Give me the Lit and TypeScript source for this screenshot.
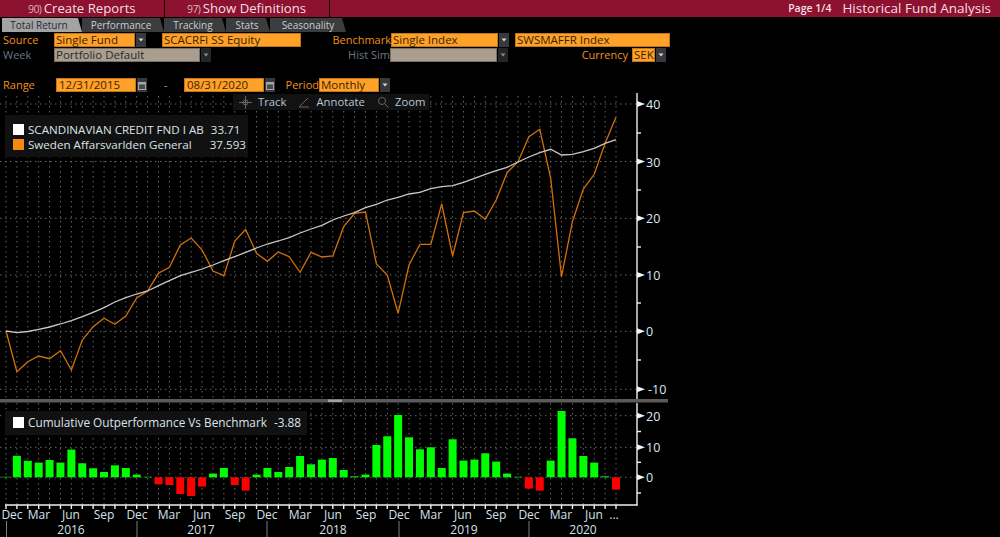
import { LitElement, html, css, svg } from "lit";
import { customElement } from "lit/decorators.js";

const X = (i: number) => 6 + i * 10.893;
const orange = [331,371.7,361.7,356,358.7,350.7,370,340,326.7,318.3,324.3,316,298,291,273.3,267.3,245,238,250,271,275.7,241,229.3,253.3,261.3,252,256.7,272.3,252.3,257,256,226.7,213.3,212,264,275,313.3,265,244.3,244.3,204,256,212.7,211,219.3,200,172.7,161.7,136.7,129.3,178.3,276.7,221.7,189,174.3,143.3,117.3];
const white = [331,332.7,331.5,329.3,327,324,320.7,316.7,312.3,307.7,302,297.7,294,291,285.7,280.7,275.7,272.3,269,265,260.7,256.7,252.3,248,244,241,237.7,233,229,225.3,220,216,212.7,207.7,204.3,200,197.3,194,192.3,188.7,186.7,185.7,182.3,178.3,174.3,170.7,167.3,162,157,152.7,149.3,155,154.3,151.7,148.3,143.3,139.7];
// bar height in pixels: positive rises from the zero line, negative hangs below it
const bars = [0.5,21.5,16.5,14.7,17.3,14.7,27.7,14,9,5.3,12,9.3,2.7,0.5,-7,-7.7,-16.7,-18.7,-9.3,3.7,9.3,-7.7,-13.3,2.7,9.3,5.3,10.3,21.3,13,17.7,19.3,7.3,1,2.7,32.3,41,62.3,40,28,30,9.3,38,16.7,17.7,24,15.7,3.7,0.5,-11.3,-13.3,16.7,66.3,39,21.3,14.7,1,-12.3];
const ZERO = 477.3;
const mainTicks: [number, string][] = [[104,"40"],[161.5,"30"],[218.3,"20"],[275,"10"],[331.3,"0"],[389.3,"-10"]];
const mainMinor = [133,190,247,303,360];
const subTicks: [number, string][] = [[415.7,"20"],[447.3,"10"],[477.3,"0"]];
const subMinor = [431.5,462.3,493];
const months: [number, string][] = [[12,"Dec"],[39,"Mar"],[71,"Jun"],[104,"Sep"],[137,"Dec"],[169,"Mar"],[202,"Jun"],[235,"Sep"],[267,"Dec"],[300,"Mar"],[333,"Jun"],[366,"Sep"],[399,"Dec"],[431,"Mar"],[463,"Jun"],[496,"Sep"],[529,"Dec"],[561,"Mar"],[594,"Jun"],[614,"..."]];
const years: [number, string][] = [[71,"2016"],[201,"2017"],[333,"2018"],[464,"2019"],[583,"2020"]];
const seps = [6.5,137,267,399,529];
const pts = (a: number[]) => a.map((y, i) => `${X(i).toFixed(1)},${y}`).join(" ");

const tri = (y: number) => svg`<polygon class="tri" points="637,${y - 3} 645,${y} 637,${y + 3}"></polygon>`;

@customElement("app-root")
export class AppRoot extends LitElement {
  static styles = css`
    :host { display: block; width: 1000px; height: 537px; background: #000; overflow: hidden;
      font-family: "Open Sans", "Noto Sans", sans-serif; }
    .head { display: flex; height: 17px; background: #8c1230; color: #f4dfe4; font-size: 13.2px; line-height: 17px; }
    .hbtn { border-right: 1px solid #1a0208; padding-left: 28px; box-sizing: border-box; white-space: nowrap; }
    .hbtn.a { width: 165px; }
    .hbtn.b { width: 165px; padding-left: 22px; }
    .num { color: #d9b3bd; font-size: 10.5px; letter-spacing: -0.6px; margin-right: -1px; }
    .pg { margin-left: auto; font-size: 10.5px; font-weight: 600; margin-right: 11px; }
    .ttl { margin-right: 9px; font-size: 13.5px; }
    .tabs { display: flex; height: 15px; padding-left: 2px; background: #000; }
    .tab { height: 14px; margin-top: 1px; font-size: 10px; line-height: 14px; background: #3a3c3e; color: #c6ccd2; text-align: center; box-sizing: border-box;
      clip-path: polygon(0 0, calc(100% - 4px) 0, 100% 100%, 0 100%); }
    .tab.on { background: #a3a3a3; color: #2a2a3a; }
    .t1 { width: 80px; padding-right: 6px; } .t2 { width: 82px; padding-right: 4px; } .t3 { width: 62px; padding-right: 4px; } .t4 { width: 44px; padding-right: 2px; } .t5 { width: 76px; }
    .row { display: flex; height: 14px; margin-top: 1px; font-size: 11.5px; line-height: 13px; color: #f0901e; white-space: nowrap; }
    .row.r3 { margin-top: 16px; height: 14px; }
    .lab { padding-left: 3px; box-sizing: border-box; font-size: 11px; }
    .lab.dim { color: #6b7682; }
    .right { text-align: right; padding: 0; }
    .f { background: #ffa028; color: #3a2400; box-shadow: inset 0 0 0 1px #c07818; padding-left: 2px; box-sizing: border-box; }
    .f.g { background: #a99e90; color: #2c2a28; box-shadow: inset 0 0 0 1px #777067; }
    .btn { width: 10px; margin-left: 1px; background: #37393c; display: flex; align-items: center; justify-content: center; }
    .btn svg { display: block; }
    .btn.dim { opacity: .65; }
    .w23 { width: 23px; } .w60 { width: 60px; } .w80 { width: 80px; padding-left: 3px; } .w81 { width: 81px; } .w107 { width: 107px; }
    .w139 { width: 139px; } .w146 { width: 146px; } .w155 { width: 155px; }
    .l54 { width: 54px; } .l56 { width: 56px; }
    .m16 { margin-left: 16px; } .m6 { margin-left: 6px; } .m4 { margin-left: 4px; }
    .l90 { width: 90px; } .l179 { width: 179px; } .l120 { width: 120px; } .l43 { width: 44px; }
    .dash { width: 37px; text-align: center; }
    .chart { position: relative; height: 444px; margin-top: 1px; }
    .chart > svg { display: block; }
    .grid { stroke: #666; stroke-width: 1; stroke-dasharray: 1.5 3.5; }
    .axis { stroke: #eef2f5; stroke-width: 1.4; }
    .tri { fill: #f2f5f7; }
    .nl { fill: #dce8f2; font-size: 12.5px; }
    .xl { fill: #d6e0ea; font-size: 12px; text-anchor: middle; }
    .tools { position: absolute; left: 233px; top: 1px; height: 16px; display: flex; background: #121212; color: #b8c6d4; font-size: 11.3px; line-height: 16px; align-items: center; }
    .tool { display: flex; align-items: center; gap: 6px; padding: 0 4px 0 6px; }
    .tool.wide { padding-left: 8px; }
    .tool svg { display: block; }
    .legend { position: absolute; left: 5px; background: #111; color: #dbe3ea; font-size: 11.6px; line-height: 15px; padding: 7px 3px 5px 8px; }
    .lg1 { top: 22px; width: 232px; }
    .lg2 { top: 318px; width: 291px; padding: 4px 3px 5px 8px; font-size: 11.8px; }
    .li { display: flex; align-items: center; white-space: nowrap; }
    .sw { width: 11px; height: 11px; margin-right: 4px; flex: none; }
    .sw.w { background: #fff; } .sw.o { background: #f48a12; }
    .val { margin-left: 7px; }
    .val2 { margin-left: 18px; }
  `;

  private caret() {
    return html`<svg width="6" height="4" viewBox="0 0 6 4"><path d="M0.5 0.5H5.5L3 3.5Z" fill="#d8d8d8"/></svg>`;
  }
  private cal() {
    return html`<svg width="8" height="9" viewBox="0 0 8 9"><path d="M0 1H8V9H0Z" fill="#a8a8a8"/><path d="M1 3.5H7V8H1Z" fill="#4a4a4a"/></svg>`;
  }

  render() {
    return html`
      <div class="head">
        <div class="hbtn a"><span class="num">90)</span> Create Reports</div>
        <div class="hbtn b"><span class="num">97)</span> Show Definitions</div>
        <div class="pg">Page 1/4</div>
        <div class="ttl">Historical Fund Analysis</div>
      </div>
      <div class="tabs">
        <div class="tab on t1">Total Return</div>
        <div class="tab t2">Performance</div>
        <div class="tab t3">Tracking</div>
        <div class="tab t4">Stats</div>
        <div class="tab t5">Seasonality</div>
      </div>
      <div class="row">
        <div class="lab l54">Source</div>
        <div class="f w81">Single Fund</div><div class="btn">${this.caret()}</div>
        <div class="f w139 m16">SCACRFI SS Equity</div>
        <div class="lab right l90">Benchmark</div>
        <div class="f w107">Single Index</div><div class="btn">${this.caret()}</div>
        <div class="f w155 m6">SWSMAFFR Index</div>
      </div>
      <div class="row">
        <div class="lab dim l54">Week</div>
        <div class="f g w146">Portfolio Default</div><div class="btn dim">${this.caret()}</div>
        <div class="lab dim right l179">Hist Sim</div>
        <div class="f g w107"></div><div class="btn dim">${this.caret()}</div>
        <div class="lab right l120">Currency</div>
        <div class="f w23 m4">SEK</div><div class="btn">${this.caret()}</div>
      </div>
      <div class="row r3">
        <div class="lab l56">Range</div>
        <div class="f w80">12/31/2015</div><div class="btn">${this.cal()}</div>
        <div class="dash">-</div>
        <div class="f w80">08/31/2020</div><div class="btn">${this.cal()}</div>
        <div class="lab right l43">Period</div>
        <div class="f w60">Monthly</div><div class="btn">${this.caret()}</div>
      </div>
      <div class="chart">
        <svg width="1000" height="444" viewBox="0 93 1000 444">
          ${orange.map((_, i) => svg`
            <line class="grid" x1=${X(i)} x2=${X(i)} y1="96" y2="398"></line>
            <line class="grid" x1=${X(i)} x2=${X(i)} y1="403" y2="505"></line>`)}
          ${[...mainTicks, ...subTicks].map(([y]) => svg`<line class="grid" x1="0" x2="637" y1=${y} y2=${y}></line>`)}
          ${bars.map((h, i) => {
            const tall = Math.abs(h);
            return svg`<rect x=${X(i) - 4} width="8" y=${h >= 0 ? ZERO - tall : ZERO} height=${tall} fill=${h >= 0 ? "#00ff00" : "#ff0000"}></rect>`;
          })}
          <polyline points=${pts(orange)} fill="none" stroke="#d2700a" stroke-width="1.3"></polyline>
          <polyline points=${pts(white)} fill="none" stroke="#c8c8c8" stroke-width="1.3"></polyline>
          <rect x="0" y="399" width="668" height="3.5" fill="#5a5a5a"></rect>
          <rect x="328" y="399.5" width="14" height="2.5" fill="#a0a0a0"></rect>
          <line class="axis" x1="637" x2="637" y1="93" y2="399"></line>
          <line class="axis" x1="637" x2="637" y1="403" y2="505.5"></line>
          <line class="axis" x1="5" x2="637.5" y1="505" y2="505"></line>
          ${orange.map((_, i) => svg`<line class="axis" x1=${X(i)} x2=${X(i)} y1="505" y2="509"></line>`)}
          ${[...mainMinor, ...subMinor].map((y) => svg`<line class="axis" x1="637" x2="641" y1=${y} y2=${y}></line>`)}
          ${[...mainTicks, ...subTicks].map(([y, t]) => svg`${tri(y)}<text class="nl" x=${t === "-10" ? 648 : 646} y=${y + 5}>${t}</text>`)}
          ${months.map(([x, t]) => svg`<text class="xl" x=${x} y="519">${t}</text>`)}
          ${years.map(([x, t]) => svg`<text class="xl" x=${x} y="534">${t}</text>`)}
          ${seps.map((x) => svg`<line x1=${x} x2=${x} y1="521" y2="537" stroke="#7a7a7a"></line>`)}
        </svg>
        <div class="tools">
          <div class="tool"><svg width="13" height="13" viewBox="0 0 13 13" fill="none" stroke="#666"><circle cx="6.5" cy="6.5" r="2.5"/><path d="M6.5 0V13M0 6.5H13"/></svg>Track</div>
          <div class="tool wide"><svg width="12" height="12" viewBox="0 0 12 12" fill="none" stroke="#666"><path d="M1 11L10 2M1 11H11"/></svg>Annotate</div>
          <div class="tool wide"><svg width="12" height="12" viewBox="0 0 12 12" fill="none" stroke="#666"><circle cx="5" cy="5" r="3.5"/><path d="M8 8L11.5 11.5"/></svg>Zoom</div>
        </div>
        <div class="legend lg1">
          <div class="li"><span class="sw w"></span>SCANDINAVIAN CREDIT FND I AB<span class="val">33.71</span></div>
          <div class="li"><span class="sw o"></span>Sweden Affarsvarlden General<span class="val2">37.593</span></div>
        </div>
        <div class="legend lg2">
          <div class="li"><span class="sw w"></span>Cumulative Outperformance Vs Benchmark<span class="val">-3.88</span></div>
        </div>
      </div>
    `;
  }
}
